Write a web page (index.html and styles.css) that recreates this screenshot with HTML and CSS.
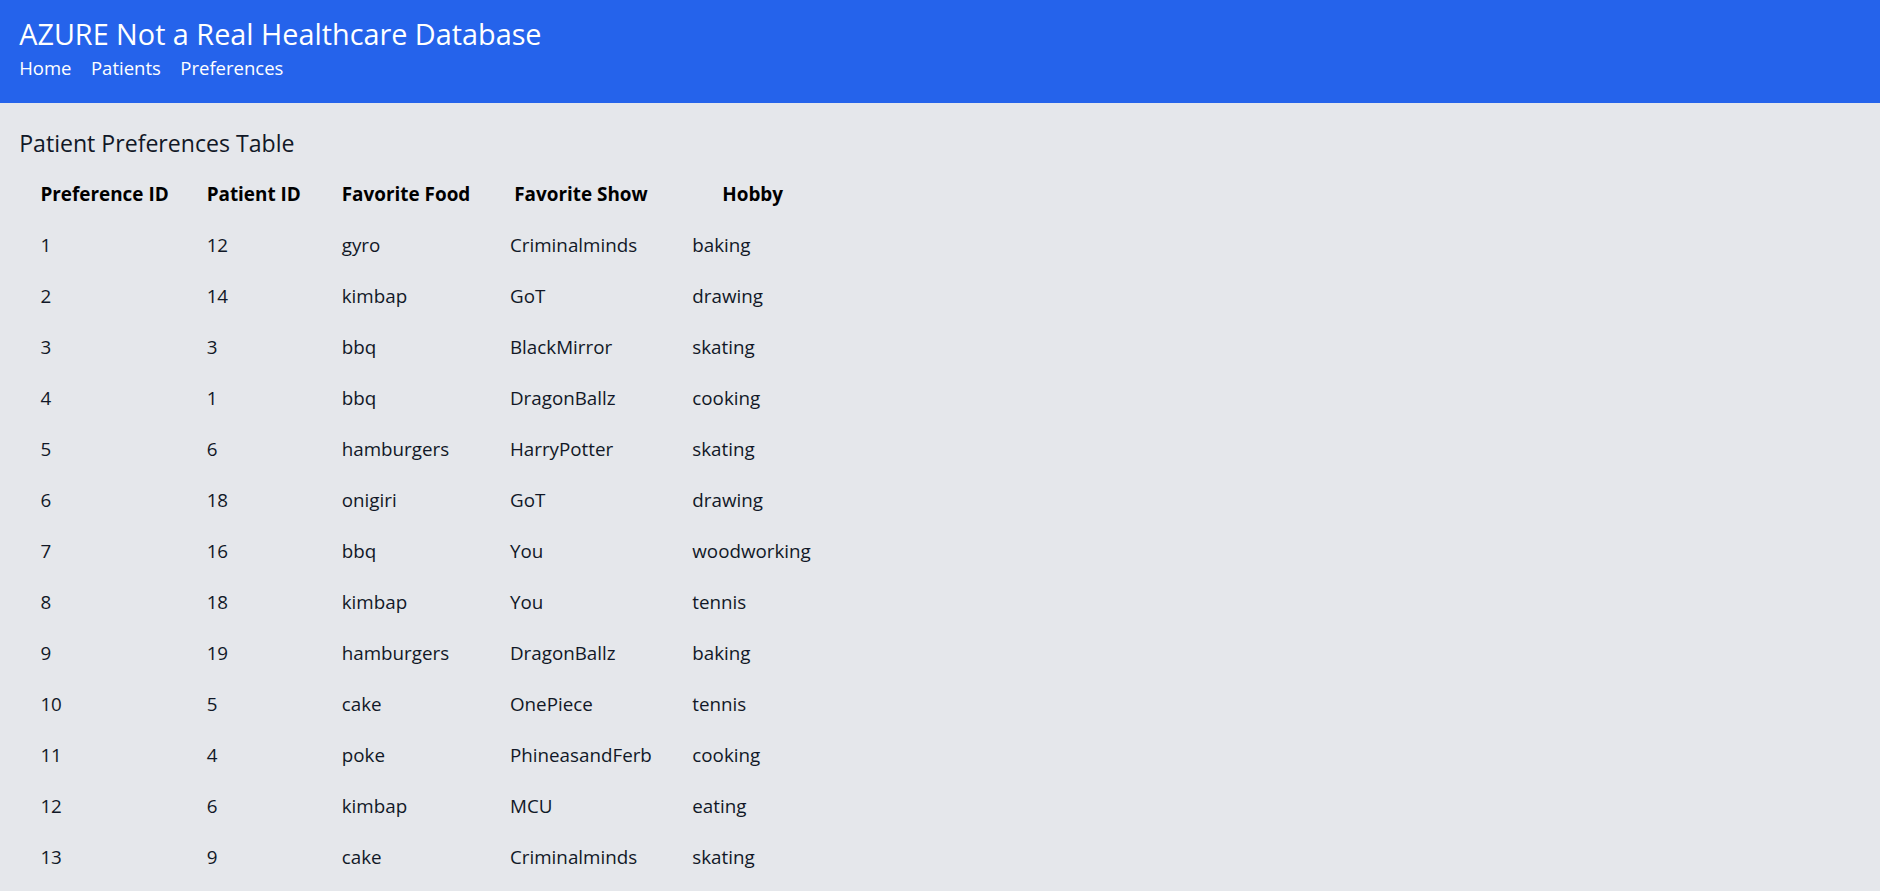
FILE: index.html
```html
<!DOCTYPE html>
<html lang="en">
<head>
<meta charset="utf-8">
<title>AZURE Not a Real Healthcare Database</title>
<link rel="stylesheet" href="styles.css">
</head>
<body>
<header class="topbar">
  <h1 class="brand">AZURE Not a Real Healthcare Database</h1>
  <nav class="nav">
    <a href="#" class="nav-link">Home</a>
    <a href="#" class="nav-link">Patients</a>
    <a href="#" class="nav-link">Preferences</a>
  </nav>
</header>
<main class="content">
  <h2 class="page-title">Patient Preferences Table</h2>
  <table class="prefs">
    <thead>
      <tr>
        <th class="c1">Preference ID</th>
        <th class="c2">Patient ID</th>
        <th class="c3">Favorite Food</th>
        <th class="c4">Favorite Show</th>
        <th class="c5">Hobby</th>
      </tr>
    </thead>
    <tbody>
      <tr><td>1</td><td>12</td><td>gyro</td><td>Criminalminds</td><td>baking</td></tr>
      <tr><td>2</td><td>14</td><td>kimbap</td><td>GoT</td><td>drawing</td></tr>
      <tr><td>3</td><td>3</td><td>bbq</td><td>BlackMirror</td><td>skating</td></tr>
      <tr><td>4</td><td>1</td><td>bbq</td><td>DragonBallz</td><td>cooking</td></tr>
      <tr><td>5</td><td>6</td><td>hamburgers</td><td>HarryPotter</td><td>skating</td></tr>
      <tr><td>6</td><td>18</td><td>onigiri</td><td>GoT</td><td>drawing</td></tr>
      <tr><td>7</td><td>16</td><td>bbq</td><td>You</td><td>woodworking</td></tr>
      <tr><td>8</td><td>18</td><td>kimbap</td><td>You</td><td>tennis</td></tr>
      <tr><td>9</td><td>19</td><td>hamburgers</td><td>DragonBallz</td><td>baking</td></tr>
      <tr><td>10</td><td>5</td><td>cake</td><td>OnePiece</td><td>tennis</td></tr>
      <tr><td>11</td><td>4</td><td>poke</td><td>PhineasandFerb</td><td>cooking</td></tr>
      <tr><td>12</td><td>6</td><td>kimbap</td><td>MCU</td><td>eating</td></tr>
      <tr><td>13</td><td>9</td><td>cake</td><td>Criminalminds</td><td>skating</td></tr>
    </tbody>
  </table>
</main>
</body>
</html>
```

FILE: styles.css
```css
html, body {
  margin: 0;
  padding: 0;
}

body {
  background: #e5e7eb;
  color: #111827;
  font-family: "Open Sans", "Noto Sans", "Liberation Sans", sans-serif;
}

.topbar {
  background: #2563eb;
  color: #ffffff;
  padding: 14.6px 19.2px 20px 19.2px;
}

.brand {
  margin: 0;
  font-weight: 400;
  font-size: 28.8px;
  line-height: 38.4px;
}

.nav {
  margin-top: 1px;
  display: flex;
  gap: 19.5px;
  line-height: 28.8px;
}

.nav-link {
  color: #ffffff;
  text-decoration: none;
  font-size: 18.5px;
}

.content {
  padding: 24px 19.2px 0 19.2px;
}

.page-title {
  margin: 0 0 6.8px 0;
  font-weight: 400;
  font-size: 23.1px;
  line-height: 33.6px;
  color: #111827;
}

.prefs {
  table-layout: fixed;
  width: 815px;
  border-collapse: separate;
  border-spacing: 2.4px 3px;
  font-size: 18.8px;
  line-height: 28.8px;
}

.prefs th,
.prefs td {
  padding: 9.6px 19.2px;
  white-space: nowrap;
  overflow: visible;
}

.prefs th {
  font-weight: 700;
  font-size: 18.9px;
  text-align: center;
  color: #000000;
}

.prefs td {
  text-align: left;
  color: #111827;
}

.prefs .c1 { width: 125.2px; text-align: left; }
.prefs .c2 { width: 94.2px; text-align: left; }
.prefs .c3 { width: 127.2px; text-align: left; }
.prefs .c4 { width: 141.2px; }
.prefs .c5 { width: 120px; }
```
